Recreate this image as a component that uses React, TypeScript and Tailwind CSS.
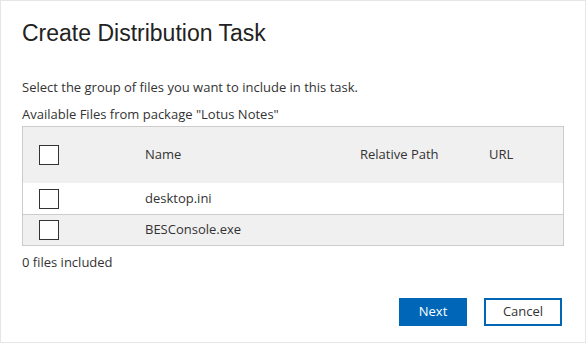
import React from "react";

const Box = () => (
  <div className="w-[20px] h-[20px] border border-[#333333] bg-white shrink-0" />
);

export default function App() {
  const rows = [
    { name: "desktop.ini", bg: "bg-white" },
    { name: "BESConsole.exe", bg: "bg-[#f0f0f0]" },
  ];
  return (
    <div
      className="w-[586px] h-[343px] bg-white border border-[#e6e6e6] text-[#333333] flex flex-col pl-[21px] pr-[22px] overflow-hidden"
      style={{ fontFamily: '"Open Sans", "Noto Sans", sans-serif' }}
    >
      <div
        className="pt-[20px] text-[23px] leading-[24px] text-[#222222]"
        style={{ fontFamily: '"Liberation Sans", Arial, sans-serif' }}
      >
        Create Distribution Task
      </div>
      <div className="mt-[33px] text-[13px] leading-[18px]">
        Select the group of files you want to include in this task.
      </div>
      <div className="mt-[9px] text-[13px] leading-[18px]">
        Available Files from package "Lotus Notes"
      </div>
      <div className="mt-[3px] border border-[#cccccc] w-[542px] flex flex-col text-[13px]">
        <div className="h-[56px] bg-[#f0f0f0] flex items-center pl-[16px]">
          <Box />
          <div className="ml-[86px] w-[215px]">Name</div>
          <div className="w-[129px]">Relative Path</div>
          <div>URL</div>
        </div>
        {rows.map((r, i) => (
          <div
            key={r.name}
            className={`h-[31px] ${r.bg} flex items-center pl-[16px] ${i === 1 ? "border-t border-[#cccccc]" : ""}`}
          >
            <Box />
            <div className="ml-[86px]">{r.name}</div>
          </div>
        ))}
      </div>
      <div className="mt-[7px] text-[13px] leading-[18px]">0 files included</div>
      <div className="mt-[27px] flex justify-end gap-[17px] pr-[1px]">
        <button className="w-[68px] h-[28px] bg-[#0067b8] text-white text-[13px]">
          Next
        </button>
        <button className="w-[78px] h-[28px] border-2 border-[#0067b8] bg-white text-[#333333] text-[13px]">
          Cancel
        </button>
      </div>
    </div>
  );
}
